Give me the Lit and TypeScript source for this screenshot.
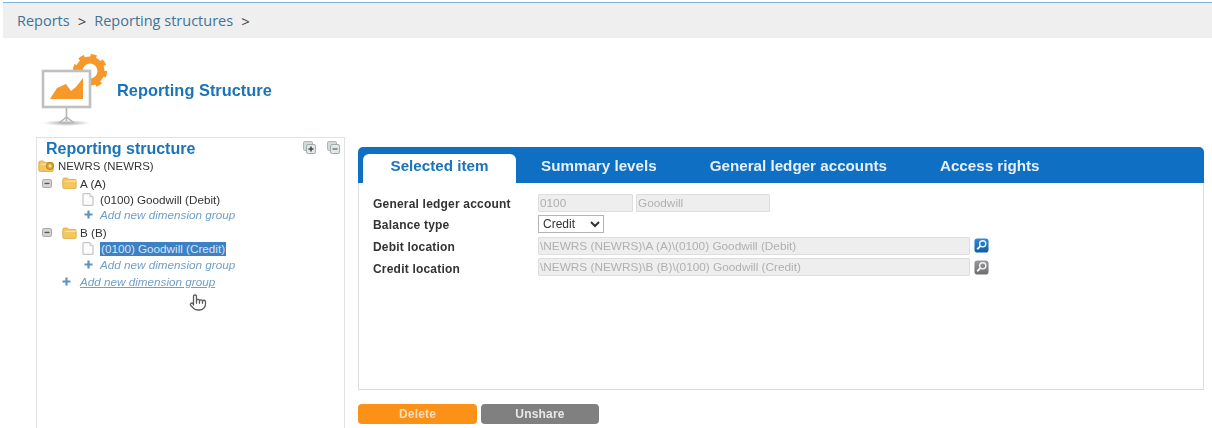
import { LitElement, html, css, svg } from "lit";
import { customElement } from "lit/decorators.js";

const folder = (w = 15, h = 12, badge = false) => html`<svg class="ic" width=${w} height=${h} viewBox="0 0 ${w} 12">
  <path d="M.8 2.5Q.8 1 2.3 1H5.5L7 2.5H${w - 2}Q${w - .8} 2.5 ${w - .8} 4V10Q${w - .8} 11.5 ${w - 2} 11.5H2.3Q.8 11.5 .8 10Z" fill="#f3c65e" stroke="#d8a93f" stroke-width=".8"/>
  <path d="M1.2 5Q4 3.6 8 3.8H${w - 1}V4.8H1.2Z" fill="#fde9b2"/>
  ${badge
    ? svg`<circle cx="12" cy="6" r="3.6" fill="#e2a52c" stroke="#a87a1c" stroke-width=".8"/><circle cx="12" cy="6" r="1.4" fill="#fbe6a8"/>`
    : ""}
</svg>`;

const doc = () => html`<svg class="ic" width="12" height="13" viewBox="0 0 12 13">
  <path d="M1 .7H8L11 3.7V12.3H1Z" fill="#fcfcfc" stroke="#b9b9b9"/>
  <path d="M8 .7V3.7H11" fill="#eee" stroke="#b9b9b9" stroke-width=".7"/>
</svg>`;

const expander = () => html`<svg class="ic" width="10" height="9" viewBox="0 0 10 9">
  <rect x=".5" y=".5" width="9" height="8" rx="1.5" fill="#d4d4d4" stroke="#ababab"/>
  <rect x="2.5" y="3.8" width="5" height="1.3" fill="#555"/>
</svg>`;

const plus = () => html`<svg class="ic" width="9" height="9" viewBox="0 0 9 9">
  <path d="M4.5 .5V8.5M.5 4.5H8.5" stroke="#5c92c4" stroke-width="2.2"/>
</svg>`;

const stack = (isPlus: boolean) => html`<svg class="ic" width="13" height="13" viewBox="0 0 13 13">
  <rect x=".5" y=".5" width="9" height="9" rx="1.5" fill="#d3dada" stroke="#aeb7b7"/>
  <rect x="3.5" y="3.5" width="9" height="9" rx="1.5" fill="#e2e7e7" stroke="#a2acac"/>
  ${isPlus
    ? svg`<path d="M8 5.5V10.5M5.5 8H10.5" stroke="#444" stroke-width="1.5"/>`
    : svg`<path d="M5.5 8H10.5" stroke="#777" stroke-width="1.5"/>`}
</svg>`;

const lens = (id: string, a: string, b: string) => html`<svg class="ic" width="15" height="15" viewBox="0 0 16 16">
  <defs><linearGradient id=${id} x1="0" y1="0" x2="0" y2="1"><stop offset="0" stop-color=${a}/><stop offset="1" stop-color=${b}/></linearGradient></defs>
  <rect width="15" height="15" x=".5" y=".5" rx="3" fill="url(#${id})"/>
  <circle cx="9.3" cy="6.2" r="3.3" fill="none" stroke="#f2f6fa" stroke-width="1.4"/>
  <path d="M6.8 8.7L3.4 12" stroke="#f2f6fa" stroke-width="2"/>
</svg>`;

const logo = () => html`<svg class="logo" width="70" height="75" viewBox="40 54 70 75">
  <defs><radialGradient id="sh"><stop offset="0" stop-color="#aaa"/><stop offset="1" stop-color="#fff"/></radialGradient></defs>
  <circle cx="90" cy="72" r="11" fill="none" stroke="#f6982a" stroke-width="7"/>
  <circle cx="90" cy="72" r="15.3" fill="none" stroke="#f6982a" stroke-width="3.6" stroke-dasharray="6 6.02"/>
  <ellipse cx="66.5" cy="124" rx="24" ry="3" fill="url(#sh)"/>
  <path d="M66.5 109V122M66.5 118L59 124M66.5 118L74 124" stroke="#b4b4b4" stroke-width="1.6" fill="none"/>
  <rect x="43" y="72" width="47" height="36" fill="#fff" stroke="#c0c0c0" stroke-width="2.6"/>
  <path d="M50 100L57 89L66 85L71 92L76 88L83 79V100Z" fill="#f6982a"/>
</svg>`;

const hand = () => html`<svg class="hand" width="18" height="21" viewBox="0 0 24 24" fill="#fff" stroke="#5a5a5a" stroke-width="1.7" stroke-linecap="round" stroke-linejoin="round">
  <path d="M18 11a2 2 0 1 1 4 0v3a8 8 0 0 1-8 8h-2c-2.8 0-4.5-.86-5.99-2.34l-3.6-3.6a2 2 0 0 1 2.83-2.82L6 15.5V4a2 2 0 0 1 4 0v5.5a2 2 0 0 1 4 .5a2 2 0 0 1 4 1Z"/>
  <path d="M10 9.5V13M14 10V13M18 11V13" fill="none"/>
</svg>`;

@customElement("app-root")
export class AppRoot extends LitElement {
  static styles = css`
    :host {
      display: block;
      height: 428px;
      overflow: hidden;
      background: #fff;
      font-family: "Liberation Sans", Arial, sans-serif;
      color: #333;
    }
    .page { filter: blur(0.35px); }
    .ic { display: block; flex: none; }
    .crumbs {
      margin: 2px 0 0 3px;
      height: 35px;
      border-top: 1px solid #7db4de;
      background: #efeff0;
      display: flex;
      align-items: center;
      padding-left: 14px;
      font: 14.5px "Open Sans", sans-serif;
      color: #3f7398;
      gap: 8px;
    }
    .crumbs .sep { color: #444; font-size: 15px; }
    .title {
      display: flex;
      align-items: center;
      height: 99px;
      padding-left: 40px;
      gap: 7px;
    }
    .title svg { margin-top: 5px; }
    .title h1 {
      margin: 0 0 -5px;
      font-size: 16.4px;
      font-weight: 700;
      color: #1a74b8;
    }
    .main {
      display: flex;
      align-items: flex-start;
      padding-left: 36px;
      gap: 13px;
    }
    .tree {
      position: relative;
      width: 307px;
      height: 300px;
      flex: none;
      border: 1px solid #e2e2e2;
    }
    .tree-head {
      display: flex;
      align-items: center;
      height: 21px;
      margin-bottom: -1px;
      padding: 0 4px 0 9px;
    }
    .tree-head h2 {
      flex: 1;
      margin: 0;
      font-size: 16px;
      font-weight: 700;
      color: #1a74b8;
    }
    .tree-head .ic + .ic { margin-left: 11px; }
    .tree-head .ic { margin-top: -3px; }
    .row {
      display: flex;
      align-items: center;
      height: 16px;
      font-size: 11.7px;
      color: #333;
      white-space: nowrap;
    }
    .root { padding-left: 1px; gap: 4px; font-size: 11.4px; }
    .folder-row { padding-left: 5px; margin-top: 1px; }
    .folder-row .ic + .ic { margin-left: 10px; }
    .folder-row span { margin-left: 3px; }
    .add + .folder-row { margin-top: 2.5px; }
    .leaf { padding-left: 45px; gap: 6px; }
    .add { height: 15px; padding-left: 47px; gap: 7px; font-style: italic; color: #6f9fc9; font-size: 11.7px; }
    .add.top { margin-top: 2px; padding-left: 25px; gap: 9px; }
    .add.top span { text-decoration: underline; }
    .sel { background: #3d80c4; color: #d6e4f2; padding: 0 1px; line-height: 14px; }
    .hand { position: absolute; left: 152px; top: 154px; }
    .right { width: 846px; flex: none; padding-top: 10px; }
    .tabs {
      display: flex;
      height: 36px;
      box-sizing: border-box;
      padding: 7px 0 0 5px;
      background: #0f6fc3;
      border-radius: 5px 5px 0 0;
    }
    .tab {
      display: flex;
      align-items: center;
      padding: 0 27px 6px 26px;
      font-size: 15.2px;
      font-weight: 700;
      color: #e6f0fa;
    }
    .tab.active {
      width: 153px;
      box-sizing: border-box;
      justify-content: center;
      padding: 0 0 6px;
      margin-right: -1px;
      background: #fff;
      color: #1a74b8;
      border-radius: 6px 6px 0 0;
    }
    .panel {
      height: 207px;
      box-sizing: border-box;
      border: 1px solid #dcdcdc;
      border-top: 0;
      padding: 9px 0 0 14px;
    }
    .f {
      display: flex;
      align-items: center;
      height: 21.5px;
    }
    .f label {
      width: 165px;
      flex: none;
      font-size: 12px;
      font-weight: 700;
      color: #333;
      letter-spacing: .2px;
      padding-top: 2px;
    }
    .f:last-child label { padding-top: 4px; }
    input {
      box-sizing: border-box;
      height: 18px;
      margin: 0;
      padding: 0 1px;
      border: 1px solid #dedede;
      background: #eee;
      color: #b0b0b0;
      font: 11.8px "Liberation Sans", sans-serif;
      border-radius: 1px;
    }
    .w1 { width: 95px; }
    .w2 { width: 134px; margin-left: 3px; }
    .w3 { width: 432px; }
    .f .ic { margin-left: 4px; }
    select {
      width: 66px;
      height: 18px;
      box-sizing: border-box;
      margin: 0;
      padding: 0;
      border: 1px solid #b4b4b4;
      background: #fff;
      color: #333;
      font: 12px "Liberation Sans", sans-serif;
    }
    .btns { display: flex; gap: 4px; margin-top: 14px; }
    .btn {
      width: 119px;
      height: 20px;
      display: flex;
      align-items: center;
      justify-content: center;
      border-radius: 4px;
      font-size: 12px;
      font-weight: 700;
      letter-spacing: .2px;
      color: #fbdcb8;
    }
    .orange { background: #fb9116; }
    .gray { width: 118px; background: #808080; color: #e8e8e8; }
  `;

  render() {
    const tabs = ["Summary levels", "General ledger accounts", "Access rights"];
    return html`<div class="page">
      <nav class="crumbs">
        <span>Reports</span><span class="sep">&gt;</span>
        <span>Reporting structures</span><span class="sep">&gt;</span>
      </nav>
      <header class="title">${logo()}<h1>Reporting Structure</h1></header>
      <div class="main">
        <aside class="tree">
          <div class="tree-head"><h2>Reporting structure</h2>${stack(true)}${stack(false)}</div>
          <div class="row root">${folder(16, 12, true)}<span>NEWRS (NEWRS)</span></div>
          <div class="row folder-row">${expander()}${folder()}<span>A (A)</span></div>
          <div class="row leaf">${doc()}<span>(0100) Goodwill (Debit)</span></div>
          <div class="row add">${plus()}<span>Add new dimension group</span></div>
          <div class="row folder-row">${expander()}${folder()}<span>B (B)</span></div>
          <div class="row leaf">${doc()}<span class="sel">(0100) Goodwill (Credit)</span></div>
          <div class="row add">${plus()}<span>Add new dimension group</span></div>
          <div class="row add top">${plus()}<span>Add new dimension group</span></div>
          ${hand()}
        </aside>
        <section class="right">
          <div class="tabs">
            <div class="tab active">Selected item</div>
            ${tabs.map((t) => html`<div class="tab">${t}</div>`)}
          </div>
          <div class="panel">
            <div class="f"><label>General ledger account</label>
              <input class="w1" disabled value="0100" /><input class="w2" disabled value="Goodwill" /></div>
            <div class="f"><label>Balance type</label>
              <select><option>Credit</option><option>Debit</option></select></div>
            <div class="f"><label>Debit location</label>
              <input class="w3" disabled value="\\NEWRS (NEWRS)\\A (A)\\(0100) Goodwill (Debit)" />${lens("lb", "#2f8ad6", "#0f5ea6")}</div>
            <div class="f"><label>Credit location</label>
              <input class="w3" disabled value="\\NEWRS (NEWRS)\\B (B)\\(0100) Goodwill (Credit)" />${lens("lg", "#9a9a9a", "#6e6e6e")}</div>
          </div>
          <div class="btns">
            <div class="btn orange">Delete</div>
            <div class="btn gray">Unshare</div>
          </div>
        </section>
      </div>
    </div>`;
  }
}
